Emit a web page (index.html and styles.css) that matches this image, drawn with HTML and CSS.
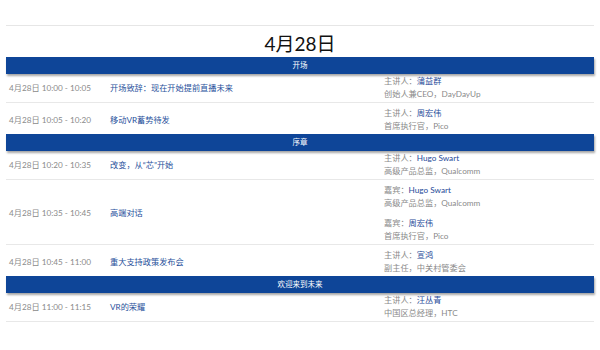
FILE: index.html
```html
<!DOCTYPE html>
<html lang="zh">
<head>
<meta charset="utf-8">
<link rel="stylesheet" href="styles.css">
</head>
<body>
<div class="wrap">
  <h1 class="day">4月28日</h1>

  <div class="bar">开场</div>
  <div class="row">
    <div class="time">4月28日 10:00 - 10:05</div>
    <div class="topic">开场致辞：现在开始提前直播未来</div>
    <div class="people">
      <div class="who"><span class="lbl">主讲人：</span><span class="name">蒲益群</span></div>
      <div class="role">创始人兼CEO，DayDayUp</div>
    </div>
  </div>
  <div class="row last">
    <div class="time">4月28日 10:05 - 10:20</div>
    <div class="topic">移动VR蓄势待发</div>
    <div class="people">
      <div class="who"><span class="lbl">主讲人：</span><span class="name">周宏伟</span></div>
      <div class="role">首席执行官，Pico</div>
    </div>
  </div>

  <div class="bar">序章</div>
  <div class="row">
    <div class="time">4月28日 10:20 - 10:35</div>
    <div class="topic">改变，从“芯”开始</div>
    <div class="people">
      <div class="who"><span class="lbl">主讲人：</span><span class="name">Hugo Swart</span></div>
      <div class="role">高级产品总监，Qualcomm</div>
    </div>
  </div>
  <div class="row">
    <div class="time">4月28日 10:35 - 10:45</div>
    <div class="topic">高端对话</div>
    <div class="people">
      <div class="who"><span class="lbl">嘉宾：</span><span class="name">Hugo Swart</span></div>
      <div class="role">高级产品总监，Qualcomm</div>
      <div class="who gap"><span class="lbl">嘉宾：</span><span class="name">周宏伟</span></div>
      <div class="role">首席执行官，Pico</div>
    </div>
  </div>
  <div class="row last">
    <div class="time">4月28日 10:45 - 11:00</div>
    <div class="topic">重大支持政策发布会</div>
    <div class="people">
      <div class="who"><span class="lbl">主讲人：</span><span class="name">宣鸿</span></div>
      <div class="role">副主任，中关村管委会</div>
    </div>
  </div>

  <div class="bar">欢迎来到未来</div>
  <div class="row">
    <div class="time">4月28日 11:00 - 11:15</div>
    <div class="topic">VR的荣耀</div>
    <div class="people">
      <div class="who"><span class="lbl">主讲人：</span><span class="name">汪丛青</span></div>
      <div class="role">中国区总经理，HTC</div>
    </div>
  </div>
</div>
</body>
</html>
```

FILE: styles.css
```css
* { box-sizing: border-box; }
html, body { margin: 0; padding: 0; background: #fff; }
body {
  font-family: Lato, "Noto Sans CJK SC", sans-serif;
  font-size: 8.2px;
  color: #888;
}
.wrap {
  margin: 25px 6px 0 6px;
  border-top: 1px solid #e6e6e6;
}
.day {
  margin: 0;
  padding-top: 4px;
  height: 31px;
  line-height: 27px;
  font-size: 19px;
  font-weight: normal;
  color: #111;
  text-align: center;
}
.bar {
  position: relative;
  z-index: 1;
  height: 17px;
  line-height: 17px;
  background: #0e4598;
  color: #fff;
  font-size: 7.5px;
  text-align: center;
  margin-bottom: -3px;
  box-shadow: 1px 2px 2px rgba(0, 0, 0, 0.35);
}
.row {
  display: grid;
  grid-template-columns: 101px 274px 1fr;
  align-items: center;
  padding: 4px 0 1px 3px;
  border-bottom: 1px solid #e8e8e8;
  line-height: 13px;
}
.row.last { border-bottom: 0; }
.time { color: #8a8a8a; }
.topic { color: #27509b; }
.people { color: #8a8a8a; }
.name { color: #1f4b99; }
.gap { margin-top: 7px; }
```
